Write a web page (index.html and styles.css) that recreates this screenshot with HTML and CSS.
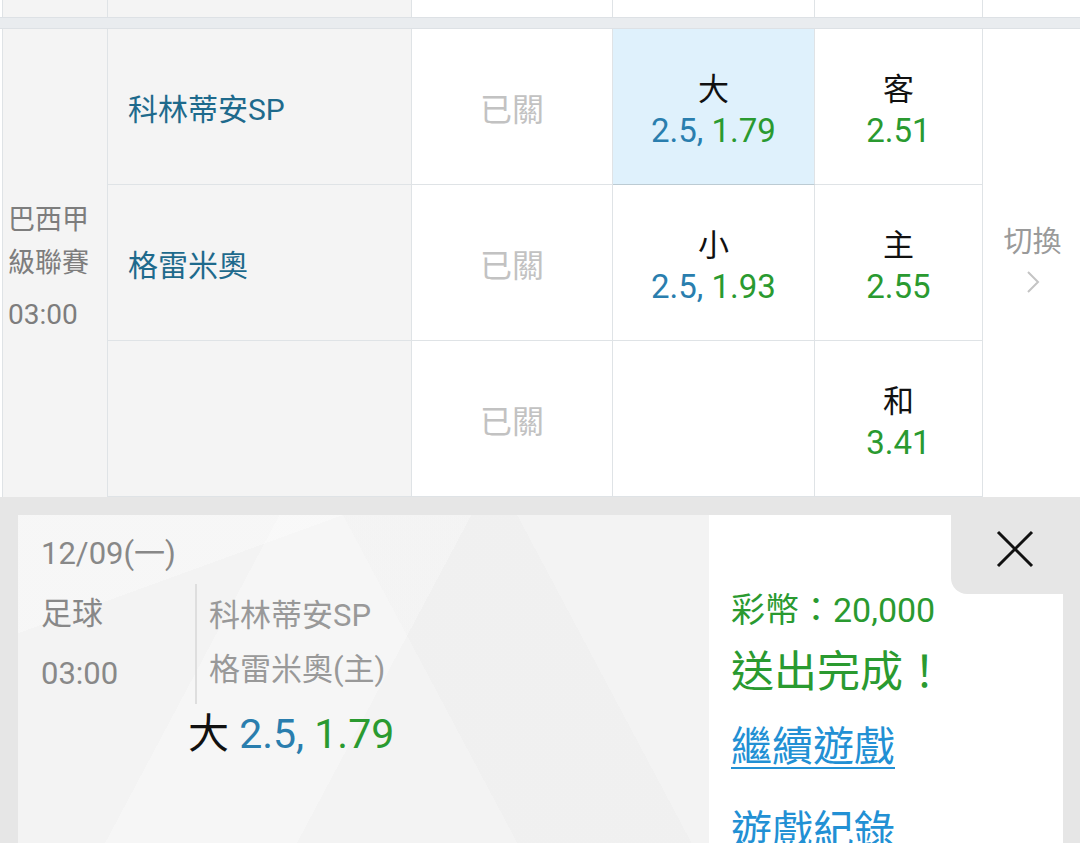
FILE: index.html
```html
<!DOCTYPE html>
<html lang="zh-Hant">
<head>
<meta charset="utf-8">
<title>投注完成</title>
<link rel="stylesheet" href="styles.css">
</head>
<body>
<div class="page">
  <div class="grid prev-row">
    <div class="cell league-bg first"></div>
    <div class="cell team-bg"></div>
    <div class="cell"></div>
    <div class="cell"></div>
    <div class="cell"></div>
    <div class="cell last"></div>
  </div>
  <div class="sep"></div>
  <div class="grid match">
    <div class="league first">
      <div class="league-name">巴西甲<br>級聯賽</div>
      <div class="league-time">03:00</div>
    </div>

    <div class="cell team">科林蒂安SP</div>
    <div class="cell closed">已關</div>
    <div class="cell odds selected">
      <div class="pick">大</div>
      <div class="val"><span class="blue">2.5,</span> <span class="green">1.79</span></div>
    </div>
    <div class="cell odds">
      <div class="pick">客</div>
      <div class="val"><span class="green">2.51</span></div>
    </div>

    <div class="switch">
      <div class="switch-label">切換</div>
      <svg class="chev" width="14" height="24" viewBox="0 0 14 24"><path d="M2 2 L12 12 L2 22" fill="none" stroke="#c4c4c4" stroke-width="2"/></svg>
    </div>

    <div class="cell team">格雷米奧</div>
    <div class="cell closed">已關</div>
    <div class="cell odds">
      <div class="pick">小</div>
      <div class="val"><span class="blue">2.5,</span> <span class="green">1.93</span></div>
    </div>
    <div class="cell odds">
      <div class="pick">主</div>
      <div class="val"><span class="green">2.55</span></div>
    </div>

    <div class="cell team"></div>
    <div class="cell closed">已關</div>
    <div class="cell odds"></div>
    <div class="cell odds">
      <div class="pick">和</div>
      <div class="val"><span class="green">3.41</span></div>
    </div>
  </div>

  <div class="result">
    <div class="ticket">
      <div class="date">12/09(一)</div>
      <div class="info">
        <div class="info-left">
          <div>足球</div>
          <div>03:00</div>
        </div>
        <div class="info-teams">
          <div>科林蒂安SP</div>
          <div>格雷米奧(主)</div>
        </div>
      </div>
      <div class="bet"><span class="bet-pick">大</span> <span class="blue">2.5,</span> <span class="green">1.79</span></div>
    </div>
    <div class="done">
      <div class="close">
        <svg width="38" height="38" viewBox="0 0 38 38"><path d="M2 2 L36 36 M36 2 L2 36" stroke="#111" stroke-width="3" fill="none"/></svg>
      </div>
      <div class="coins">彩幣：20,000</div>
      <div class="ok">送出完成！</div>
      <a class="link l1" href="#">繼續遊戲</a>
      <a class="link l2" href="#">遊戲紀錄</a>
    </div>
  </div>
</div>
</body>
</html>
```

FILE: styles.css
```css
html, body {
  margin: 0;
  padding: 0;
}
body {
  width: 1080px;
  height: 843px;
  overflow: hidden;
  background: #e6e6e6;
  font-family: Roboto, "Noto Sans CJK TC", "Noto Sans", sans-serif;
}
.page {
  width: 1080px;
}
.grid {
  display: grid;
  grid-template-columns: 108px 304px 201px 202px 168px 97px;
  background: #fff;
}
.prev-row {
  height: 17px;
}
.cell {
  border-right: 1px solid #dfe3e6;
  border-bottom: 1px solid #dfe3e6;
  box-sizing: border-box;
}
.prev-row .cell {
  border-bottom: none;
}
.prev-row .last {
  border-right: none;
}
.league-bg, .team-bg {
  background: #f4f4f4;
}
.first {
  margin-left: 2px;
  border-left: 1px solid #dfe3e6;
}
.sep {
  height: 10px;
  background: #e9ecef;
  border-top: 1px solid #dde1e5;
  border-bottom: 1px solid #dde1e5;
}
.match {
  grid-template-rows: repeat(3, 156px);
}
.league {
  grid-row: 1 / span 3;
  grid-column: 1;
  background: #f4f4f4;
  border-right: 1px solid #dfe3e6;
  display: flex;
  flex-direction: column;
  justify-content: center;
  padding-left: 5px;
  padding-top: 8px;
  color: #7d7d7d;
  font-size: 27px;
}
.league-name {
  line-height: 43px;
}
.league-time {
  line-height: 43px;
  margin-top: 8px;
  font-size: 28px;
}
.team {
  background: #f4f4f4;
  display: flex;
  align-items: center;
  padding-left: 20px;
  font-size: 30px;
  color: #1e6a8c;
}
.closed {
  display: flex;
  align-items: center;
  justify-content: center;
  font-size: 32px;
  color: #c2c2c2;
}
.odds {
  display: flex;
  flex-direction: column;
  align-items: center;
  justify-content: center;
  line-height: 41px;
  padding-top: 6px;
}
.selected {
  background: #dff1fc;
  border-bottom-color: #bccbd3;
}
.pick {
  font-size: 31px;
  color: #111;
}
.val {
  font-size: 33px;
}
.blue {
  color: #2a7eae;
}
.green {
  color: #2a9a30;
}
.switch {
  grid-row: 1 / span 3;
  grid-column: 6;
  display: flex;
  flex-direction: column;
  align-items: center;
  justify-content: center;
  padding-left: 2px;
  padding-bottom: 10px;
}
.switch-label {
  font-size: 29px;
  color: #9a9a9a;
  line-height: 40px;
}
.chev {
  margin-top: 8px;
}

/* result panel */
.result {
  display: flex;
  padding: 18px 17px 0 18px;
}
.ticket {
  width: 691px;
  height: 340px;
  box-sizing: border-box;
  padding: 19px 0 0 23px;
  background:
    linear-gradient(118deg, rgba(255,255,255,0) 0 30%, rgba(255,255,255,0.25) 30% 52%, rgba(255,255,255,0) 52%),
    linear-gradient(62deg, rgba(0,0,0,0) 0 58%, rgba(0,0,0,0.01) 58% 78%, rgba(0,0,0,0) 78%),
    linear-gradient(160deg, rgba(255,255,255,0.3) 0 20%, rgba(255,255,255,0) 20%),
    #f3f3f3;
  color: #888;
  font-size: 31px;
}
.date {
  line-height: 40px;
  font-size: 31px;
}
.info {
  display: flex;
  margin-top: 10px;
}
.info-left {
  width: 154px;
  line-height: 60px;
}
.info-teams {
  border-left: 2px solid #dedede;
  padding: 5px 0 3px 12px;
  line-height: 54px;
  color: #999;
}
.bet {
  margin: 5px 0 0 147px;
  font-size: 41px;
  line-height: 50px;
}
.bet-pick {
  color: #111;
}
.done {
  width: 354px;
  height: 340px;
  background: #fff;
  display: flex;
  flex-direction: column;
  align-items: flex-start;
  padding-left: 22px;
  box-sizing: border-box;
}
.done > * {
  flex-shrink: 0;
}
.close {
  align-self: flex-end;
  width: 112px;
  height: 79px;
  box-sizing: border-box;
  background: #e6e6e6;
  border-bottom-left-radius: 16px;
  padding: 15px 0 0 45px;
}
.close svg {
  display: block;
}
.coins {
  color: #2a9a30;
  font-size: 34px;
  line-height: 32px;
}
.ok {
  color: #2a9a30;
  font-size: 43px;
  line-height: 60px;
  margin-top: 16px;
}
.link {
  color: #2290d4;
  font-size: 41px;
  line-height: 60px;
  text-decoration: none;
}
.l1 {
  margin-top: 15px;
  text-decoration: underline;
  text-decoration-thickness: 2px;
  text-underline-offset: 6px;
}
.l2 {
  margin-top: 24px;
}
```
